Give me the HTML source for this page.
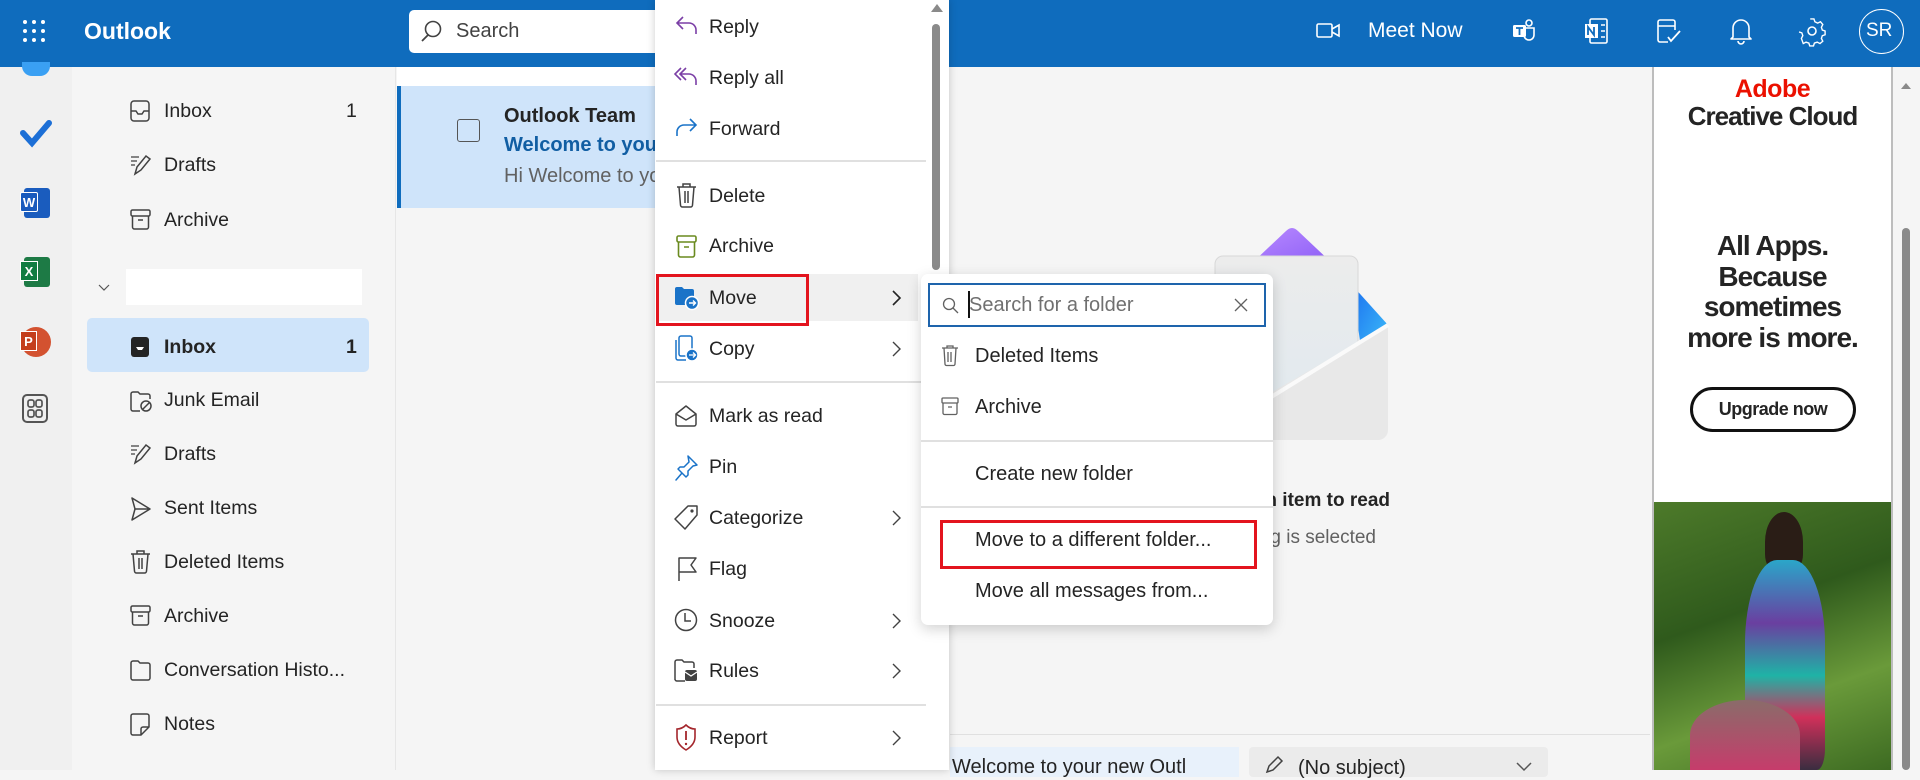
<!DOCTYPE html>
<html><head><meta charset="utf-8"><style>
*{margin:0;padding:0;box-sizing:border-box}
body{width:1920px;height:770px;overflow:hidden;background:#f5f5f5;font-family:"Liberation Sans",sans-serif;color:#242424;position:relative}
.abs{position:absolute}
.hdr{left:0;top:0;width:1920px;height:67px;background:#0f6cbd}
.t{position:absolute;white-space:nowrap}
svg{position:absolute;overflow:visible}
.fi{font-size:19.5px;color:#242424}
.mi{font-size:19.5px;color:#242424}
.si{font-size:20px}
</style></head><body>
<!-- header -->
<div class="abs hdr"></div>
<svg style="left:22px;top:19px" width="24" height="24"><g fill="#fff"><circle cx="3" cy="3" r="2"/><circle cx="12" cy="3" r="2"/><circle cx="21" cy="3" r="2"/><circle cx="3" cy="12" r="2"/><circle cx="12" cy="12" r="2"/><circle cx="21" cy="12" r="2"/><circle cx="3" cy="21" r="2"/><circle cx="12" cy="21" r="2"/><circle cx="21" cy="21" r="2"/></g></svg>
<div class="t" style="left:84px;top:18px;color:#fff;font-size:23px;font-weight:bold">Outlook</div>
<div class="abs" style="left:409px;top:10px;width:540px;height:43px;background:#fff;border-radius:5px"></div>
<svg style="left:421px;top:20px" width="24" height="24"><circle cx="12" cy="9" r="7.5" fill="none" stroke="#424242" stroke-width="1.6"/><path d="M7 15 L1 21" stroke="#424242" stroke-width="1.8"/></svg>
<div class="t" style="left:456px;top:20px;font-size:20px;color:#424242">Search</div>

<svg style="left:1316px;top:21px" width="26" height="20"><rect x="1" y="3" width="15" height="13" rx="1.5" fill="none" stroke="#fff" stroke-width="1.6"/><path d="M16 8 L23 4 V15 L16 11" fill="none" stroke="#fff" stroke-width="1.6"/></svg>
<div class="t" style="left:1368px;top:19px;color:#fff;font-size:21px">Meet Now</div>
<svg style="left:1511px;top:18px" width="26" height="28"><rect x="2" y="7" width="13" height="12" rx="1.5" fill="#fff"/><path d="M5 10h7M8.5 10v7" stroke="#0f6cbd" stroke-width="1.8"/><circle cx="18" cy="5" r="3" fill="none" stroke="#fff" stroke-width="1.6"/><path d="M14 10h9v7a5 5 0 0 1-10 0" fill="none" stroke="#fff" stroke-width="1.6"/></svg>
<svg style="left:1584px;top:18px" width="26" height="28"><rect x="6" y="1" width="17" height="24" rx="1.5" fill="none" stroke="#fff" stroke-width="1.6"/><rect x="1" y="6" width="13" height="14" fill="#fff"/><path d="M4 17V9l6 8V9" fill="none" stroke="#0f6cbd" stroke-width="1.8"/><path d="M17 7h4M17 13h4M17 19h4" stroke="#fff" stroke-width="1.5"/></svg>
<svg style="left:1656px;top:18px" width="26" height="28"><path d="M19 12V4a2 2 0 0 0-2-2H4a2 2 0 0 0-2 2v18a2 2 0 0 0 2 2h8" fill="none" stroke="#fff" stroke-width="1.6"/><path d="M2 8h17" stroke="#fff" stroke-width="1.6"/><path d="M12 19l3 4 9-10" fill="none" stroke="#fff" stroke-width="1.8"/></svg>
<svg style="left:1729px;top:17px" width="24" height="28"><path d="M4 20V11a8 8 0 0 1 16 0v9l2 2H2z" fill="none" stroke="#fff" stroke-width="1.6" stroke-linejoin="round"/><path d="M9 24a3 3 0 0 0 6 0" fill="none" stroke="#fff" stroke-width="1.6"/></svg>
<svg style="left:1799px;top:18px" width="26" height="26"><circle cx="13" cy="13" r="4" fill="none" stroke="#fff" stroke-width="1.6"/><path d="M11 1h4l1 3 3 1.5 3-1.5 2.5 3-1.5 3 1 3 3 1v4l-3 1-1 3 1.5 3-3 2.5-3-1.5-3 1-1 3h-4l-1-3-3-1-3 1.5L1.5 22 3 19l-1-3-3-1" fill="none" stroke="#fff" stroke-width="1.5" transform="translate(1,0) scale(.93)"/></svg>
<div class="abs" style="left:1859px;top:9px;width:45px;height:45px;border:1.5px solid #fff;border-radius:50%"></div>
<div class="t" style="left:1866px;top:20px;color:#fff;font-size:19px">SR</div>

<!-- app rail -->
<div class="abs" style="left:0;top:67px;width:72px;height:703px;background:#f0f0f0"></div>
<div class="abs" style="left:22px;top:62px;width:28px;height:14px;background:#3aa0f3;border-radius:0 0 10px 10px"></div>
<svg style="left:21px;top:118px" width="30" height="30"><path d="M2 15 L11 25 L28 5" fill="none" stroke="#1c6fd6" stroke-width="6" stroke-linecap="round"/></svg>
<div class="abs" style="left:24px;top:188px;width:26px;height:30px;background:#1a5cbe;border-radius:3px"></div>
<div class="abs" style="left:20px;top:192px;width:18px;height:20px;background:#185abd;color:#fff;font-size:13px;font-weight:bold;text-align:center;line-height:20px;border-radius:2px;border:1px solid #fff">W</div>
<div class="abs" style="left:24px;top:257px;width:26px;height:30px;background:#1d7a45;border-radius:3px"></div>
<div class="abs" style="left:20px;top:261px;width:18px;height:20px;background:#107c41;color:#fff;font-size:13px;font-weight:bold;text-align:center;line-height:20px;border:1px solid #fff">X</div>
<div class="abs" style="left:21px;top:327px;width:30px;height:30px;background:#d35230;border-radius:50%"></div>
<div class="abs" style="left:20px;top:331px;width:17px;height:20px;background:#c43e1c;color:#fff;font-size:13px;font-weight:bold;text-align:center;line-height:20px;border:1px solid #fff">P</div>
<svg style="left:22px;top:394px" width="28" height="30"><rect x="1" y="1" width="24" height="27" rx="4" fill="none" stroke="#555" stroke-width="2"/><rect x="6" y="6" width="6" height="7" rx="2" fill="none" stroke="#555" stroke-width="1.7"/><rect x="14" y="6" width="6" height="7" rx="2" fill="none" stroke="#555" stroke-width="1.7"/><rect x="6" y="16" width="6" height="7" rx="2" fill="none" stroke="#555" stroke-width="1.7"/><rect x="14" y="16" width="6" height="7" rx="2" fill="none" stroke="#555" stroke-width="1.7"/></svg>

<!-- folder pane -->
<div class="abs" style="left:72px;top:67px;width:324px;height:703px;background:#f5f5f5;border-right:1px solid #e6e6e6"></div>
<div class="abs" style="left:87px;top:318px;width:282px;height:54px;background:#cfe4fa;border-radius:5px"></div>
<div class="abs" style="left:126px;top:269px;width:236px;height:36px;background:#fff"></div>
<svg style="left:98px;top:284px" width="12" height="8"><path d="M1 1l5 5 5-5" fill="none" stroke="#555" stroke-width="1.2"/></svg>
<svg style="left:130px;top:100px" width="22" height="22"><rect x="1" y="1" width="18" height="20" rx="3" fill="none" stroke="#424242" stroke-width="1.5"/><path d="M1 11h5l2 3h4l2-3h5" fill="none" stroke="#424242" stroke-width="1.5"/></svg>
<svg style="left:130px;top:154px" width="22" height="22"><path d="M5 20l2-7L16 2l4 3-9 11z" fill="none" stroke="#424242" stroke-width="1.5"/><path d="M1 3h8M1 7h6M1 11h4" stroke="#424242" stroke-width="1.3"/></svg>
<svg style="left:130px;top:209px" width="22" height="22"><rect x="1" y="1" width="19" height="6" rx="1.5" fill="none" stroke="#424242" stroke-width="1.5"/><path d="M2.5 7v11a2 2 0 0 0 2 2h12a2 2 0 0 0 2-2V7M8 11h5" fill="none" stroke="#424242" stroke-width="1.5"/></svg>
<svg style="left:130px;top:336px" width="22" height="22"><rect x="1" y="1" width="18" height="20" rx="3" fill="#242424"/><path d="M1 11h5l2 3h4l2-3h5" fill="#fff"/><path d="M3 13h3l2 3h4l2-3h3v5H3z" fill="#242424"/></svg>
<svg style="left:130px;top:390px" width="24" height="24"><path d="M1 19V4a2 2 0 0 1 2-2h5l2 2h8a2 2 0 0 1 2 2v3M10 21H3a2 2 0 0 1-2-2" fill="none" stroke="#424242" stroke-width="1.5"/><circle cx="16" cy="16" r="5" fill="none" stroke="#424242" stroke-width="1.5"/><path d="M13 19l6-6" stroke="#424242" stroke-width="1.5"/></svg>
<svg style="left:130px;top:443px" width="22" height="22"><path d="M5 20l2-7L16 2l4 3-9 11z" fill="none" stroke="#424242" stroke-width="1.5"/><path d="M1 3h8M1 7h6M1 11h4" stroke="#424242" stroke-width="1.3"/></svg>
<svg style="left:130px;top:497px" width="22" height="24"><path d="M2 1l18 11L2 23l3-11z M5 12h15" fill="none" stroke="#424242" stroke-width="1.5" stroke-linejoin="round"/></svg>
<svg style="left:130px;top:550px" width="22" height="24"><path d="M1 4h19M7 4V1h7v3M3 4l1.5 17a2 2 0 0 0 2 2h8a2 2 0 0 0 2-2L18 4M9 8v11M12 8v11" fill="none" stroke="#424242" stroke-width="1.5"/></svg>
<svg style="left:130px;top:605px" width="22" height="22"><rect x="1" y="1" width="19" height="6" rx="1.5" fill="none" stroke="#424242" stroke-width="1.5"/><path d="M2.5 7v11a2 2 0 0 0 2 2h12a2 2 0 0 0 2-2V7M8 11h5" fill="none" stroke="#424242" stroke-width="1.5"/></svg>
<svg style="left:130px;top:659px" width="22" height="22"><path d="M1 19V4a2 2 0 0 1 2-2h5l2 2h8a2 2 0 0 1 2 2v13a2 2 0 0 1-2 2H3a2 2 0 0 1-2-2z" fill="none" stroke="#424242" stroke-width="1.5"/></svg>
<svg style="left:130px;top:713px" width="22" height="24"><path d="M3 1h14a2 2 0 0 1 2 2v11l-8 8H3a2 2 0 0 1-2-2V3a2 2 0 0 1 2-2zM19 14h-6a2 2 0 0 0-2 2v6" fill="none" stroke="#424242" stroke-width="1.5"/></svg>
<div class="t fi" style="left:164px;top:100px">Inbox</div><div class="t fi" style="left:346px;top:100px">1</div>
<div class="t fi" style="left:164px;top:154px">Drafts</div>
<div class="t fi" style="left:164px;top:209px">Archive</div>
<div class="t fi" style="left:164px;top:336px;font-weight:bold">Inbox</div><div class="t fi" style="left:346px;top:336px;font-weight:bold">1</div>
<div class="t fi" style="left:164px;top:389px">Junk Email</div>
<div class="t fi" style="left:164px;top:443px">Drafts</div>
<div class="t fi" style="left:164px;top:497px">Sent Items</div>
<div class="t fi" style="left:164px;top:551px">Deleted Items</div>
<div class="t fi" style="left:164px;top:605px">Archive</div>
<div class="t fi" style="left:164px;top:659px">Conversation Histo...</div>
<div class="t fi" style="left:164px;top:713px">Notes</div>

<!-- message list -->
<div class="abs" style="left:397px;top:67px;width:300px;height:19px;background:#fff"></div>
<div class="abs" style="left:397px;top:86px;width:300px;height:122px;background:#cfe4fa;border-left:4px solid #0f6cbd"></div>
<div class="abs" style="left:457px;top:119px;width:23px;height:23px;border:1.5px solid #555;border-radius:3px"></div>
<div class="t" style="left:504px;top:105px;font-size:20px;font-weight:bold">Outlook Team</div>
<div class="t" style="left:504px;top:134px;font-size:20px;font-weight:bold;color:#115ea3">Welcome to your</div>
<div class="t" style="left:504px;top:165px;font-size:20px;color:#616161">Hi Welcome to your</div>

<!-- reading pane -->
<svg style="left:1212px;top:225px" width="180" height="220">
<defs><linearGradient id="pp" x1="0" y1="0" x2="1" y2="1"><stop offset="0" stop-color="#b98bff"/><stop offset="1" stop-color="#8b5cf6"/></linearGradient><linearGradient id="bl" x1="0" y1="0" x2="1" y2="1"><stop offset="0" stop-color="#1b6ff0"/><stop offset="1" stop-color="#3ec0f8"/></linearGradient><linearGradient id="pap" x1="0" y1="0" x2="0" y2="1"><stop offset="0" stop-color="#ececec"/><stop offset="1" stop-color="#dfe9ef"/></linearGradient></defs>
<path d="M74 6 Q80 0 86 6 L122 40 H38z" fill="url(#pp)"/>
<path d="M140 60 L176 100 L150 130z" fill="url(#bl)"/>
<rect x="3" y="31" width="143" height="180" rx="8" fill="url(#pap)" stroke="#d8d8d8"/>
<path d="M3 200 L176 100 V205 a10 10 0 0 1-10 10 H12z" fill="#e8e8e8"/>
<path d="M30 190 L176 100" stroke="#fafafa" stroke-width="4"/>
</svg>
<div class="t" style="left:1160px;top:490px;width:230px;text-align:right;font-size:19px;font-weight:bold">Select an item to read</div>
<div class="t" style="left:1160px;top:527px;width:216px;text-align:right;font-size:19px;color:#616161">Nothing is selected</div>
<div class="abs" style="left:950px;top:734px;width:700px;height:1px;background:#e0e0e0"></div>
<div class="abs" style="left:950px;top:747px;width:289px;height:30px;background:#e8f1fb"></div>
<div class="t" style="left:952px;top:756px;font-size:20px">Welcome to your new Outl</div>
<div class="abs" style="left:1249px;top:747px;width:299px;height:30px;background:#ebebeb;border-radius:4px"></div>
<svg style="left:1265px;top:756px" width="18" height="18"><path d="M2 16l2-6 9-9 4 4-9 9z" fill="none" stroke="#424242" stroke-width="1.5"/></svg>
<div class="t" style="left:1298px;top:757px;font-size:20px">(No subject)</div>
<svg style="left:1516px;top:762px" width="16" height="10"><path d="M1 1l7 7 7-7" fill="none" stroke="#555" stroke-width="1.5"/></svg>

<!-- ad -->
<div class="abs" style="left:1652px;top:67px;width:241px;height:703px;background:#fff;border-left:2px solid #bdbdbd;border-right:2px solid #bdbdbd"></div>
<div class="t" style="left:1654px;top:75px;width:237px;text-align:center;font-size:25px;font-weight:bold;color:#eb1000;letter-spacing:-0.5px">Adobe</div>
<div class="t" style="left:1654px;top:101px;width:237px;text-align:center;font-size:26px;font-weight:bold;letter-spacing:-1px">Creative Cloud</div>
<div class="t" style="left:1654px;top:231px;width:237px;text-align:center;font-size:28px;font-weight:bold;line-height:30.5px;letter-spacing:-1px">All Apps.<br>Because<br>sometimes<br>more is more.</div>
<div class="abs" style="left:1690px;top:387px;width:166px;height:45px;border:3px solid #111;border-radius:23px;text-align:center;line-height:39px;font-size:18px;font-weight:bold;letter-spacing:-0.5px">Upgrade now</div>
<div class="abs" style="left:1654px;top:502px;width:237px;height:268px;background:linear-gradient(160deg,#4d7a2a,#2f5a1c 40%,#6a9a3a 70%,#3d6b22)"></div>
<div class="abs" style="left:1765px;top:512px;width:38px;height:60px;background:#2a1d16;border-radius:50% 50% 30% 30%"></div>
<div class="abs" style="left:1745px;top:560px;width:80px;height:210px;background:linear-gradient(180deg,#2aa6c9,#6a3fa0 30%,#1fb3a6 55%,#d0305a 75%,#3a2d40);border-radius:40% 40% 10% 10%"></div>
<div class="abs" style="left:1690px;top:700px;width:110px;height:70px;background:linear-gradient(180deg,#8a6c6a,#c63c6b);border-radius:50% 50% 0 0"></div>
<div class="abs" style="left:1898px;top:67px;width:22px;height:703px;background:#f5f5f5"></div>
<div class="abs" style="left:1902px;top:228px;width:8px;height:542px;background:#8a8a8a;border-radius:4px"></div>
<svg style="left:1901px;top:82px" width="10" height="8"><path d="M0 7L5 1 10 7z" fill="#8a8a8a"/></svg>

<!-- context menu -->
<div class="abs" style="left:655px;top:0;width:294px;height:770px;background:#fff;box-shadow:0 0 8px rgba(0,0,0,.2)"></div>
<svg style="left:931px;top:3px" width="12" height="10"><path d="M0 9L6 1 12 9z" fill="#8a8a8a"/></svg>
<div class="abs" style="left:932px;top:24px;width:8px;height:246px;background:#8a8a8a;border-radius:4px"></div>
<div class="abs" style="left:656px;top:274px;width:262px;height:47px;background:#f0f0f0"></div>
<div class="abs" style="left:656px;top:160px;width:270px;height:1.5px;background:#e0e0e0"></div>
<div class="abs" style="left:656px;top:381px;width:270px;height:1.5px;background:#e0e0e0"></div>
<div class="abs" style="left:656px;top:704px;width:270px;height:1.5px;background:#e0e0e0"></div>
<svg style="left:675px;top:15px" width="24" height="22"><path d="M8 2L2 8l6 6M2 8h12a7 7 0 0 1 7 7v4" fill="none" stroke="#7b3fa6" stroke-width="1.6"/></svg>
<svg style="left:673px;top:66px" width="26" height="22"><path d="M8 2L2 8l6 6M13 2L7 8l6 6M7 8h9a7 7 0 0 1 7 7v4" fill="none" stroke="#7b3fa6" stroke-width="1.6"/></svg>
<svg style="left:675px;top:117px" width="24" height="22"><path d="M15 2l6 6-6 6M21 8H9a7 7 0 0 0-7 7v4" fill="none" stroke="#1a73c8" stroke-width="1.6"/></svg>
<svg style="left:676px;top:183px" width="22" height="26"><path d="M1 4h19M7 4V1h7v3M3 4l1.5 18a2 2 0 0 0 2 2h8a2 2 0 0 0 2-2L18 4M9 8v12M12 8v12" fill="none" stroke="#424242" stroke-width="1.5"/></svg>
<svg style="left:676px;top:235px" width="22" height="24"><rect x="1" y="1" width="19" height="6" rx="1.5" fill="none" stroke="#6a8a1f" stroke-width="1.6"/><path d="M2.5 7v13a2 2 0 0 0 2 2h12a2 2 0 0 0 2-2V7M8 12h5" fill="none" stroke="#6a8a1f" stroke-width="1.6"/></svg>
<svg style="left:674px;top:285px" width="26" height="26"><path d="M1 4a2 2 0 0 1 2-2h5l2 2h8a2 2 0 0 1 2 2v12a2 2 0 0 1-2 2H3a2 2 0 0 1-2-2z" fill="#1a73c8"/><circle cx="18" cy="18" r="6.5" fill="#1a73c8" stroke="#fff" stroke-width="1.5"/><path d="M15 18h6M19 15.5l2.5 2.5-2.5 2.5" fill="none" stroke="#fff" stroke-width="1.4"/></svg>
<svg style="left:675px;top:335px" width="26" height="28"><rect x="4" y="1" width="13" height="20" rx="2" fill="none" stroke="#1a73c8" stroke-width="1.5"/><path d="M1 5v18a2 2 0 0 0 2 2h8" fill="none" stroke="#1a73c8" stroke-width="1.5"/><circle cx="17" cy="20" r="6" fill="#1a73c8" stroke="#fff" stroke-width="1.5"/><path d="M14 20h6M18 17.5l2.5 2.5-2.5 2.5" fill="none" stroke="#fff" stroke-width="1.3"/></svg>
<svg style="left:675px;top:404px" width="24" height="24"><path d="M1 10L11 2l10 8v10a2 2 0 0 1-2 2H3a2 2 0 0 1-2-2z M1 10l10 6 10-6" fill="none" stroke="#424242" stroke-width="1.5" stroke-linejoin="round"/></svg>
<svg style="left:675px;top:455px" width="24" height="26"><path d="M13 1l9 9-4 1-5 5v4l-2 2-4-4-6 7 6-7-4-4 2-2h4l5-5z" fill="none" stroke="#1a73c8" stroke-width="1.5" stroke-linejoin="round"/></svg>
<svg style="left:674px;top:505px" width="26" height="26"><path d="M14 1h9v9L11 24 1 14z" fill="none" stroke="#424242" stroke-width="1.5" stroke-linejoin="round"/><circle cx="18" cy="6" r="1.6" fill="#424242"/></svg>
<svg style="left:677px;top:556px" width="22" height="26"><path d="M2 25V2h17l-5 7 5 7H2" fill="none" stroke="#424242" stroke-width="1.5" stroke-linejoin="round"/></svg>
<svg style="left:674px;top:608px" width="26" height="26"><circle cx="12" cy="12" r="10.5" fill="none" stroke="#424242" stroke-width="1.5"/><path d="M11 5v8h6" fill="none" stroke="#424242" stroke-width="1.5"/></svg>
<svg style="left:674px;top:658px" width="26" height="26"><path d="M1 22V4a2 2 0 0 1 2-2h5l2 2h8a2 2 0 0 1 2 2v4M11 23H3a2 2 0 0 1-2-2" fill="none" stroke="#424242" stroke-width="1.5"/><rect x="11" y="12" width="12" height="11" rx="2" fill="#424242"/><path d="M11 14l6 4 6-4" fill="none" stroke="#fff" stroke-width="1.3"/></svg>
<svg style="left:676px;top:724px" width="22" height="28"><path d="M10 1C7 4 4 5 1 5v8c0 6 4 10 9 13 5-3 9-7 9-13V5c-3 0-6-1-9-4z" fill="none" stroke="#a4262c" stroke-width="1.6"/><path d="M10 7v9" stroke="#a4262c" stroke-width="1.8"/><circle cx="10" cy="20" r="1.2" fill="#a4262c"/></svg>
<div class="t mi" style="left:709px;top:16px">Reply</div>
<div class="t mi" style="left:709px;top:67px">Reply all</div>
<div class="t mi" style="left:709px;top:118px">Forward</div>
<div class="t mi" style="left:709px;top:185px">Delete</div>
<div class="t mi" style="left:709px;top:235px">Archive</div>
<div class="t mi" style="left:709px;top:287px">Move</div>
<div class="t mi" style="left:709px;top:338px">Copy</div>
<div class="t mi" style="left:709px;top:405px">Mark as read</div>
<div class="t mi" style="left:709px;top:456px">Pin</div>
<div class="t mi" style="left:709px;top:507px">Categorize</div>
<div class="t mi" style="left:709px;top:558px">Flag</div>
<div class="t mi" style="left:709px;top:610px">Snooze</div>
<div class="t mi" style="left:709px;top:660px">Rules</div>
<div class="t mi" style="left:709px;top:727px">Report</div>
<svg style="left:892px;top:290px" width="10" height="16"><path d="M1 1l7 7-7 7" fill="none" stroke="#242424" stroke-width="1.6"/></svg>
<svg style="left:892px;top:341px" width="10" height="16"><path d="M1 1l7 7-7 7" fill="none" stroke="#424242" stroke-width="1.4"/></svg>
<svg style="left:892px;top:510px" width="10" height="16"><path d="M1 1l7 7-7 7" fill="none" stroke="#424242" stroke-width="1.4"/></svg>
<svg style="left:892px;top:613px" width="10" height="16"><path d="M1 1l7 7-7 7" fill="none" stroke="#424242" stroke-width="1.4"/></svg>
<svg style="left:892px;top:663px" width="10" height="16"><path d="M1 1l7 7-7 7" fill="none" stroke="#424242" stroke-width="1.4"/></svg>
<svg style="left:892px;top:730px" width="10" height="16"><path d="M1 1l7 7-7 7" fill="none" stroke="#424242" stroke-width="1.4"/></svg>
<div class="abs" style="left:656px;top:274px;width:153px;height:52px;border:3px solid #e3141e"></div>

<!-- submenu -->
<div class="abs" style="left:921px;top:274px;width:352px;height:351px;background:#fff;border-radius:7px;box-shadow:0 4px 14px rgba(0,0,0,.18)"></div>
<div class="abs" style="left:928px;top:283px;width:338px;height:44px;border:2.5px solid #1e64ac"></div>
<svg style="left:942px;top:297px" width="18" height="18"><circle cx="7" cy="7" r="5.5" fill="none" stroke="#616161" stroke-width="1.3"/><path d="M11 11l5 5" stroke="#616161" stroke-width="1.3"/></svg>
<div class="abs" style="left:968px;top:291px;width:1.5px;height:27px;background:#111"></div>
<div class="t si" style="left:969px;top:294px;color:#707070">Search for a folder</div>
<svg style="left:1234px;top:298px" width="14" height="14"><path d="M1 1l12 12M13 1L1 13" stroke="#616161" stroke-width="1.3"/></svg>
<svg style="left:941px;top:345px" width="18" height="22"><path d="M1 3h16M6 3V1h6v2M3 3l1 16a1.5 1.5 0 0 0 1.5 1.5h7A1.5 1.5 0 0 0 14 19l1-16M7 7v10M10 7v10" fill="none" stroke="#616161" stroke-width="1.3"/></svg>
<svg style="left:941px;top:397px" width="18" height="20"><rect x="1" y="1" width="16" height="5" rx="1" fill="none" stroke="#616161" stroke-width="1.3"/><path d="M2 6v10a1.5 1.5 0 0 0 1.5 1.5h11A1.5 1.5 0 0 0 16 16V6M7 10h4" fill="none" stroke="#616161" stroke-width="1.3"/></svg>
<div class="t si" style="left:975px;top:345px">Deleted Items</div>
<div class="t si" style="left:975px;top:396px">Archive</div>
<div class="abs" style="left:921px;top:440px;width:352px;height:1.5px;background:#e0e0e0"></div>
<div class="t si" style="left:975px;top:463px">Create new folder</div>
<div class="abs" style="left:921px;top:506px;width:352px;height:1.5px;background:#e0e0e0"></div>
<div class="t si" style="left:975px;top:529px">Move to a different folder...</div>
<div class="t si" style="left:975px;top:580px">Move all messages from...</div>
<div class="abs" style="left:940px;top:520px;width:317px;height:49px;border:3px solid #e3141e"></div>
</body></html>
